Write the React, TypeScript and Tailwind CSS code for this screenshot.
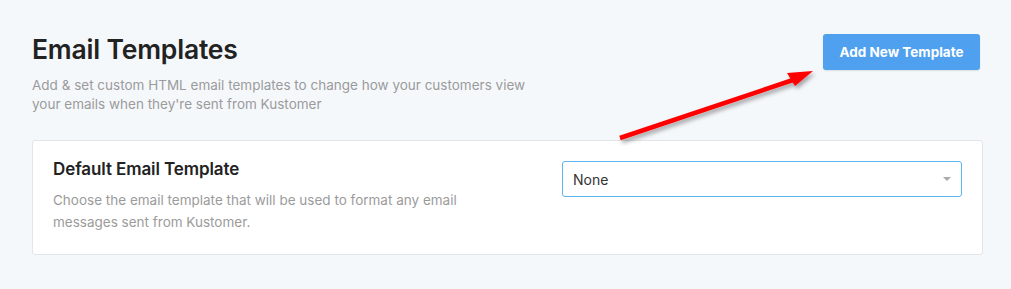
function AnnotationArrow() {
  // red callout arrow pointing at the button
  return (
    <svg
      className="pointer-events-none absolute left-0 top-0"
      width="1011"
      height="289"
      viewBox="0 0 1011 289"
    >
      <defs>
        <filter id="arrow-shadow" x="-10%" y="-30%" width="130%" height="170%">
          <feDropShadow dx="2" dy="3" stdDeviation="2" floodColor="#000" floodOpacity="0.35" />
        </filter>
      </defs>
      <g filter="url(#arrow-shadow)">
        <line x1="620" y1="138" x2="796" y2="79" stroke="#ff0000" strokeWidth="4.5" strokeLinecap="butt" />
        <polygon points="813,71 787,73 795,86" fill="#ff0000" />
      </g>
    </svg>
  );
}

export default function App() {
  return (
    <div className="relative h-[289px] w-[1011px] overflow-hidden bg-[#f5f8fb] font-['Inter',sans-serif]">
      <div className="pl-[32px] pr-[28px] pt-[33px]">
        <div className="flex items-start justify-between">
          <div>
            <h1 className="text-[26.5px] font-semibold leading-[32px] tracking-[-0.2px] text-[#222]">
              Email Templates
            </h1>
            <p className="mt-[11px] w-[500px] text-[13.5px] leading-[19px] text-[#9b9b9b]">
              Add &amp; set custom HTML email templates to change how your customers view your emails
              when they're sent from Kustomer
            </p>
          </div>
          <button
            type="button"
            className="mr-[3px] mt-px h-[36px] w-[157px] rounded-[3px] bg-[#4fa1ef] text-[13.5px] font-bold text-white shadow-[0_1px_2px_rgba(0,0,0,0.1)]"
          >
            Add New Template
          </button>
        </div>

        <section className="mt-[26px] flex h-[115px] items-start justify-between rounded-[3px] border border-[#e2e4e6] bg-white pl-[20px] pr-[20px] pt-[16px]">
          <div>
            <h2 className="text-[17px] font-semibold leading-[24px] tracking-[-0.1px] text-[#222]">
              Default Email Template
            </h2>
            <p className="mt-[8px] w-[430px] text-[13.5px] leading-[22px] text-[#9b9b9b]">
              Choose the email template that will be used to format any email messages sent from
              Kustomer.
            </p>
          </div>
          <div className="mt-[4px] flex h-[36px] w-[400px] items-center justify-between rounded-[3px] border border-[#5db5f0] pl-[10px] pr-[10px] text-[14px] text-[#333]">
            <span>None</span>
            <span className="h-0 w-0 border-x-[4px] border-t-[4px] border-x-transparent border-t-[#aaa]" />
          </div>
        </section>
      </div>
      <AnnotationArrow />
    </div>
  );
}
